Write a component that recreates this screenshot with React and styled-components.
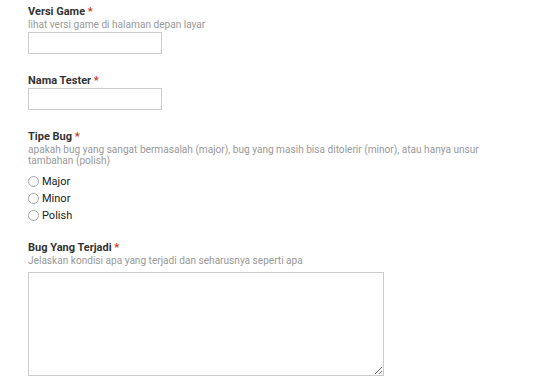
import React from "react"
import styled, { createGlobalStyle } from "styled-components"

const GlobalStyle = createGlobalStyle`
  body {
    margin: 0;
    background: #ffffff;
    font-family: Roboto, "Liberation Sans", Arial, sans-serif;
  }
`

export default function App() {
    return (
        <>
            <GlobalStyle />
            <Form>
                <Field>
                    <Label>Versi Game <Req>*</Req></Label>
                    <Help>lihat versi game di halaman depan layar</Help>
                    <TextInput type="text" />
                </Field>

                <Field>
                    <Label>Nama Tester <Req>*</Req></Label>
                    <TextInput type="text" />
                </Field>

                <Field>
                    <Label>Tipe Bug <Req>*</Req></Label>
                    <Help>apakah bug yang sangat bermasalah (major), bug yang masih bisa ditolerir (minor), atau hanya unsur tambahan (polish)</Help>
                    <Options>
                        {["Major", "Minor", "Polish"].map((o) => (
                            <Option key={o}>
                                <Radio />
                                <span>{o}</span>
                            </Option>
                        ))}
                    </Options>
                </Field>

                <Field>
                    <Label>Bug Yang Terjadi <Req>*</Req></Label>
                    <Help>Jelaskan kondisi apa yang terjadi dan seharusnya seperti apa</Help>
                    <TextArea />
                </Field>
            </Form>
        </>
    )
}

const Form = styled.div`
    display: flex;
    flex-direction: column;
    padding: 5px 0 0 28px;
    width: 460px;
`

const Field = styled.div`
    display: flex;
    flex-direction: column;
    align-items: flex-start;
    margin-bottom: 20px;
`

const Label = styled.div`
    font-weight: 700;
    font-size: 11px;
    line-height: 13px;
    color: #333333;
    margin-bottom: 1px;
`

const Req = styled.span`
    color: #c43b1d;
`

const Help = styled.div`
    font-size: 10.1px;
    line-height: 11px;
    color: #999999;
    margin-bottom: 2px;
`

const TextInput = styled.input`
    width: 134px;
    height: 22px;
    box-sizing: border-box;
    margin: 0;
    border: 1px solid #cccccc;
    outline: none;
`

const Options = styled.div`
    display: flex;
    flex-direction: column;
    gap: 6px;
    margin-top: 8px;
`

const Option = styled.label`
    display: flex;
    align-items: center;
    gap: 3px;
    font-size: 11px;
    line-height: 11px;
    color: #222222;
`

const Radio = styled.span`
    width: 11px;
    height: 11px;
    box-sizing: border-box;
    border: 1px solid #aaaaaa;
    border-radius: 50%;
    background: #ffffff;
`

const TextArea = styled.textarea`
    width: 356px;
    height: 104px;
    box-sizing: border-box;
    margin: 4px 0 0 0;
    border: 1px solid #cccccc;
    outline: none;
`
